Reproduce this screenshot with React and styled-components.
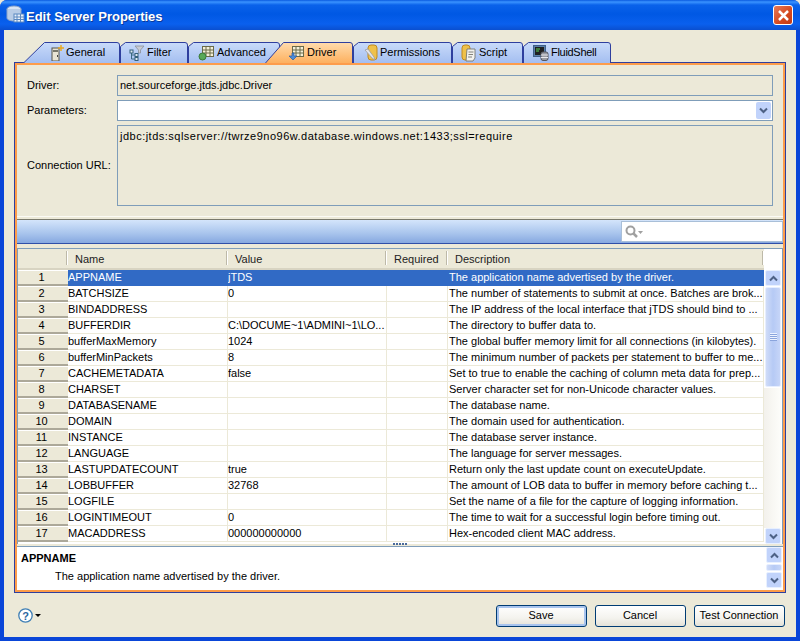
import React from 'react';
import styled, { createGlobalStyle } from 'styled-components';

const GlobalStyle = createGlobalStyle`
  html, body { margin: 0; padding: 0; background: #ece9d8; }
  body { font-family: "Liberation Sans", Arial, sans-serif; font-size: 11px; color: #000; }
  * { box-sizing: border-box; }
`;

const TABS = [
  { name: 'General', width: 97, slant: 21, pad: 26, gap: 0, icon: 'general' },
  { name: 'Filter', width: 68, pad: 9, gap: 1, icon: 'filter' },
  { name: 'Advanced', width: 92, pad: 10, gap: 2, icon: 'advanced' },
  { name: 'Driver', width: 88, slant: 18, pad: 23, gap: 2, icon: 'driver', active: true, overlap: 15 },
  { name: 'Permissions', width: 99, pad: 11, gap: -1, icon: 'permissions' },
  { name: 'Script', width: 71, pad: 9, gap: 1, icon: 'script' },
  { name: 'FluidShell', width: 88, pad: 10, gap: 1, icon: 'shell', tight: true }
];

const ROWS = [
  ['APPNAME', 'jTDS', 'The application name advertised by the driver.'],
  ['BATCHSIZE', '0', 'The number of statements to submit at once. Batches are brok...'],
  ['BINDADDRESS', '', 'The IP address of the local interface that jTDS should bind to ...'],
  ['BUFFERDIR', 'C:\\DOCUME~1\\ADMINI~1\\LO...', 'The directory to buffer data to.'],
  ['bufferMaxMemory', '1024', 'The global buffer memory limit for all connections (in kilobytes).'],
  ['bufferMinPackets', '8', 'The minimum number of packets per statement to buffer to me...'],
  ['CACHEMETADATA', 'false', 'Set to true to enable the caching of column meta data for prep...'],
  ['CHARSET', '', 'Server character set for non-Unicode character values.'],
  ['DATABASENAME', '', 'The database name.'],
  ['DOMAIN', '', 'The domain used for authentication.'],
  ['INSTANCE', '', 'The database server instance.'],
  ['LANGUAGE', '', 'The language for server messages.'],
  ['LASTUPDATECOUNT', 'true', 'Return only the last update count on executeUpdate.'],
  ['LOBBUFFER', '32768', 'The amount of LOB data to buffer in memory before caching t...'],
  ['LOGFILE', '', 'Set the name of a file for the capture of logging information.'],
  ['LOGINTIMEOUT', '0', 'The time to wait for a successful login before timing out.'],
  ['MACADDRESS', '000000000000', 'Hex-encoded client MAC address.']
];

const TabIcon = ({ kind }) => {
  if (kind === 'general') {
    return (
      <svg width="16" height="16" viewBox="0 0 16 16">
        <rect x="3" y="3" width="7" height="13" fill="#e8e4d4" stroke="#55554a" />
        <rect x="4" y="5" width="5" height="2" fill="#77776a" />
        <rect x="8" y="10" width="1" height="2" fill="#444" />
        <path d="M12 0v6M9 3h6" stroke="#e8a820" strokeWidth="1.5" />
      </svg>
    );
  }
  if (kind === 'filter') {
    return (
      <svg width="16" height="16" viewBox="0 0 16 16">
        <path d="M6 1h9l-3.5 4v3h-2V5z" fill="#c8ccd4" stroke="#8a8f9a" strokeWidth="0.8" />
        <path d="M2.5 6v8h4M2.5 10h4" fill="none" stroke="#3a6a80" />
        <rect x="1" y="5" width="3" height="3" fill="#dfe8f0" stroke="#35607a" />
        <rect x="6" y="8.5" width="3" height="3" fill="#dfe8f0" stroke="#35607a" />
        <rect x="6" y="12.5" width="3" height="3" fill="#dfe8f0" stroke="#35607a" />
      </svg>
    );
  }
  if (kind === 'advanced' || kind === 'driver') {
    return (
      <svg width="17" height="16" viewBox="0 0 17 16">
        <rect x="4.5" y="1.5" width="11" height="10" fill="#f4f0d8" stroke="#6a6a48" />
        <path d="M4.5 5h11M4.5 8h11M8 1.5v10M12 1.5v10" stroke="#6a6a48" />
        {kind === 'advanced' ? (
          <circle cx="4.5" cy="11.5" r="3.5" fill="#58a858" stroke="#3a7a3a" />
        ) : (
          <path d="M4 8v3H1l4 4 4-4H6V8z" fill="#4a8ad8" stroke="#2a5aa0" strokeWidth="0.7" />
        )}
      </svg>
    );
  }
  if (kind === 'permissions') {
    return (
      <svg width="16" height="18" viewBox="0 0 16 18">
        <rect x="4" y="1" width="9" height="15" rx="3" fill="#efc14a" stroke="#c08a20" />
        <path d="M1 6l7 8 3 2-1-3-6-8z" fill="#e4e6ea" stroke="#9a9ca4" strokeWidth="0.8" />
      </svg>
    );
  }
  if (kind === 'script') {
    return (
      <svg width="16" height="18" viewBox="0 0 16 18">
        <rect x="1" y="1" width="8" height="15" rx="3" fill="#efc14a" stroke="#c08a20" />
        <path d="M6 5h8v9l-2 3H5z" fill="#f2f2ee" stroke="#77776f" strokeWidth="0.9" />
        <path d="M7.5 8h5M7.5 10.5h4.5M7 13h4" stroke="#77776f" strokeWidth="0.9" />
      </svg>
    );
  }
  return (
    <svg width="16" height="16" viewBox="0 0 16 16">
      <rect x="0.5" y="0.5" width="12" height="11" fill="#5a7fa8" stroke="#3f5f88" />
      <rect x="2" y="2" width="9" height="8" fill="#202020" />
      <path d="M3 4h4M3 6h3" stroke="#58d858" />
      <rect x="8" y="7" width="7" height="8.5" rx="2" fill="#9a9ca4" stroke="#55575f" />
      <path d="M8 10h7M8 12.5h7" stroke="#e8e8ec" />
    </svg>
  );
};

const tabPath = (w, slant) =>
  slant
    ? `M0.5 21 L${slant + 0.5} 0.5 H${w - 3} Q${w - 0.5} 0.5 ${w - 0.5} 3 V21`
    : `M0.5 21 V4.5 L5.5 0.5 H${w - 3} Q${w - 0.5} 0.5 ${w - 0.5} 3 V21`;

const Tab = ({ tab }) => (
  <TabItem $width={tab.width} $pad={tab.pad} $active={tab.active} $overlap={tab.overlap}>
    <TabShape width={tab.width} height="21">
      <defs>
        <linearGradient id={`tab-${tab.icon}`} x1="0" y1="0" x2="0" y2="1">
          <stop offset="0" stopColor={tab.active ? '#ffdcae' : '#c9dbfa'} />
          <stop offset="1" stopColor={tab.active ? '#fdb05e' : '#a4bef0'} />
        </linearGradient>
      </defs>
      <path d={tabPath(tab.width, tab.slant)} fill={`url(#tab-${tab.icon})`} stroke="#2f3f9e" />
    </TabShape>
    <TabIconSlot><TabIcon kind={tab.icon} /></TabIconSlot>
    <TabLabel $gap={tab.gap} $tight={tab.tight}>{tab.name}</TabLabel>
  </TabItem>
);

const Chevron = ({ up }) => (
  <svg width="9" height="7" viewBox="0 0 9 7">
    <path
      d={up ? 'M1 5.5l3.5-3.5 3.5 3.5' : 'M1 1.5l3.5 3.5 3.5-3.5'}
      fill="none"
      stroke="#4d6185"
      strokeWidth="2"
    />
  </svg>
);

export default function App() {
  return (
    <Win>
      <GlobalStyle />
      <TitleBar>
        <svg width="20" height="20" viewBox="0 0 20 20">
          <ellipse cx="8" cy="4" rx="7" ry="3" fill="#d8e4f4" stroke="#8aa4c8" />
          <path d="M1 4v9c0 1.6 3 3 7 3s7-1.4 7-3V4" fill="#b8cce6" stroke="#8aa4c8" />
          <rect x="8" y="9" width="10" height="8" fill="#e8f0fa" stroke="#5a88c0" />
          <path d="M8 12h10M8 14.5h10M11 9v8M14.5 9v8" stroke="#5a88c0" />
        </svg>
        <TitleText>Edit Server Properties</TitleText>
        <CloseButton>
          <svg width="13" height="13" viewBox="0 0 13 13">
            <path d="M2 2l9 9M11 2l-9 9" stroke="#fff" strokeWidth="2.5" />
          </svg>
        </CloseButton>
      </TitleBar>
      <Body>
        <TabStrip>
          {TABS.map(tab => <Tab key={tab.name} tab={tab} />)}
        </TabStrip>
        <Panel>
          <PanelInner>
            <Form>
              <FieldLabel>Driver:</FieldLabel>
              <ReadOnlyField>net.sourceforge.jtds.jdbc.Driver</ReadOnlyField>
              <FieldLabel>Parameters:</FieldLabel>
              <Combo>
                <ComboButton><Chevron /></ComboButton>
              </Combo>
              <FieldLabel>Connection URL:</FieldLabel>
              <UrlField>jdbc:jtds:sqlserver://twrze9no96w.database.windows.net:1433;ssl=require</UrlField>
            </Form>
            <FormSash />
            <ToolBar>
              <SearchBox>
                <svg width="18" height="14" viewBox="0 0 18 14">
                  <circle cx="5.5" cy="5.5" r="4" fill="none" stroke="#a0a0a0" strokeWidth="2" />
                  <path d="M8.5 8.5l3.5 3.5" stroke="#a0a0a0" strokeWidth="2.5" />
                  <path d="M13 6h5l-2.5 3z" fill="#a0a0a0" />
                </svg>
              </SearchBox>
            </ToolBar>
            <Table>
              <TableMain>
                <HeaderRow>
                  <HeaderCell />
                  <HeaderCell>Name</HeaderCell>
                  <HeaderCell>Value</HeaderCell>
                  <HeaderCell>Required</HeaderCell>
                  <HeaderCell>Description</HeaderCell>
                </HeaderRow>
                {ROWS.map((row, i) => (
                  <Row key={row[0]} $selected={i === 0}>
                    <RowNumber>{i + 1}</RowNumber>
                    <Cell>{row[0]}</Cell>
                    <Cell>{row[1]}</Cell>
                    <Cell />
                    <Cell $indent>{row[2]}</Cell>
                  </Row>
                ))}
              </TableMain>
              <TableScroll>
                <ScrollButton><Chevron up /></ScrollButton>
                <ScrollThumb $height={100}>
                  <Grip />
                </ScrollThumb>
                <ScrollTrack />
                <ScrollButton><Chevron /></ScrollButton>
              </TableScroll>
            </Table>
            <DetailSash>
              <SashDots />
            </DetailSash>
            <Detail>
              <DetailText>
                <DetailTitle>APPNAME</DetailTitle>
                <DetailBody>The application name advertised by the driver.</DetailBody>
              </DetailText>
              <DetailScroll>
                <ScrollButton><Chevron up /></ScrollButton>
                <ScrollThumb $height={7} />
                <ScrollButton><Chevron /></ScrollButton>
              </DetailScroll>
            </Detail>
          </PanelInner>
        </Panel>
        <Footer>
          <HelpButton>
            <svg width="15" height="15" viewBox="0 0 15 15">
              <circle cx="7.5" cy="7.5" r="6.7" fill="#fff" stroke="#3f7fb5" strokeWidth="1.3" />
              <text x="7.5" y="11.5" textAnchor="middle" fontSize="11" fontWeight="700" fill="#2a66a0" fontFamily="Liberation Sans">?</text>
            </svg>
            <HelpCaret />
          </HelpButton>
          <Buttons>
            <Button $default>Save</Button>
            <Button>Cancel</Button>
            <Button>Test Connection</Button>
          </Buttons>
        </Footer>
      </Body>
    </Win>
  );
}

const Win = styled.div`
  width: 800px;
  height: 641px;
  display: flex;
  flex-direction: column;
  overflow: hidden;
  background: #0a46d8;
  border-radius: 7px 7px 0 0;
`;

const TitleBar = styled.div`
  height: 30px;
  flex: none;
  display: flex;
  align-items: center;
  padding: 0 7px 0 6px;
  background: linear-gradient(
    180deg,
    #0a5ae0 0,
    #3a93ff 2px,
    #0a62ea 5px,
    #0058e4 14px,
    #0a60ee 24px,
    #0a4fd0 30px
  );
`;

const TitleText = styled.div`
  flex: 1;
  padding-top: 3px;
  color: #fff;
  font-size: 13px;
  font-weight: 700;
  text-shadow: 1px 1px 0 #0a3a9a;
`;

const CloseButton = styled.div`
  width: 20px;
  height: 20px;
  display: flex;
  align-items: center;
  justify-content: center;
  border: 1px solid #fff;
  border-radius: 3px;
  background: linear-gradient(135deg, #e87a58, #d4481e 60%, #c23a14);
`;

const Body = styled.div`
  flex: 1;
  display: flex;
  flex-direction: column;
  margin: 0 4px 4px;
  padding: 12px 10px 0;
  background: #ece9d8;
`;

const TabStrip = styled.div`
  display: flex;
  height: 20px;
  padding-left: 9px;
  position: relative;
  z-index: 1;
`;

const TabItem = styled.div`
  position: relative;
  z-index: ${props => (props.$active ? 2 : 'auto')};
  flex: none;
  width: ${props => props.$width}px;
  height: 21px;
  margin-left: ${props => (props.$overlap ? -props.$overlap : 0)}px;
  padding-left: ${props => props.$pad}px;
  display: flex;
  align-items: center;
`;

const TabShape = styled.svg`
  position: absolute;
  left: 0;
  top: 0;
`;

const TabIconSlot = styled.span`
  position: relative;
  display: flex;
  width: 17px;
  margin-top: 1px;
`;

const TabLabel = styled.span`
  position: relative;
  margin-left: ${props => props.$gap}px;
  margin-bottom: 2px;
  white-space: nowrap;
  letter-spacing: ${props => (props.$tight ? '-0.3px' : '0')};
`;

const Panel = styled.div`
  height: 531px;
  flex: none;
  border: 1px solid #2f3f9e;
`;

const PanelInner = styled.div`
  height: 100%;
  display: flex;
  flex-direction: column;
  border: 2px solid #fd9c4a;
`;

const Form = styled.div`
  height: 151px;
  flex: none;
  padding: 10px 10px 11px;
  display: grid;
  grid-template-columns: 90px 1fr;
  grid-template-rows: 21px 21px 81px;
  row-gap: 4px;
  align-items: center;
`;

const FieldLabel = styled.label`
  white-space: nowrap;
  margin-bottom: 2px;
`;

const ReadOnlyField = styled.div`
  height: 100%;
  border: 1px solid #7f9db9;
  padding: 0 2px;
  line-height: 19px;
`;

const UrlField = styled(ReadOnlyField)`
  padding-top: 1px;
  letter-spacing: 0.49px;
`;

const Combo = styled.div`
  height: 100%;
  border: 1px solid #7f9db9;
  background: #fff;
  display: flex;
  justify-content: flex-end;
  align-items: center;
  padding-right: 1px;
`;

const ComboButton = styled.div`
  width: 15px;
  height: 17px;
  display: flex;
  align-items: center;
  justify-content: center;
  border-radius: 2px;
  background: #c1d3fb;
`;

const FormSash = styled.div`
  height: 3px;
  flex: none;
  border-top: 1px solid #fbfaf4;
`;

const ToolBar = styled.div`
  height: 25px;
  flex: none;
  display: flex;
  justify-content: flex-end;
  align-items: center;
  border-top: 1px solid #7a7a6c;
  border-bottom: 1px solid #2f4fa8;
  background: linear-gradient(180deg, #d4e5fb 0, #a7c3ec 60%, #86a8e0 100%);
`;

const SearchBox = styled.div`
  width: 162px;
  height: 21px;
  margin-top: -1px;
  padding: 3px 0 0 3px;
  background: #fff;
  border: 1px solid #a9bfd8;
`;

const Table = styled.div`
  height: 296px;
  flex: none;
  margin-top: 4px;
  display: flex;
  background: #fff;
  border: 1px solid #7f9db9;
  border-bottom: none;
`;

const TableMain = styled.div`
  width: 746px;
  flex: none;
  display: flex;
  flex-direction: column;
`;

const COLUMNS = '50px 160px 159px 61px 316px';

const HeaderRow = styled.div`
  display: grid;
  grid-template-columns: ${COLUMNS};
  height: 21px;
  flex: none;
  background: #ece9d8;
  box-shadow: inset 0 -2px 0 #d8d4c2;
`;

const HeaderCell = styled.div`
  padding: 2px 0 0 7px;
  line-height: 16px;
  position: relative;
  color: #222;

  &::after {
    content: '';
    position: absolute;
    right: 1px;
    top: 2px;
    height: 14px;
    width: 1px;
    background: #bdb9a8;
    box-shadow: 1px 0 0 #fff;
  }
`;

const Row = styled.div`
  display: grid;
  grid-template-columns: ${COLUMNS};
  height: 16px;
  flex: none;
  line-height: 15px;
  background: ${props => (props.$selected ? '#316ac5' : '#fff')};
  color: ${props => (props.$selected ? '#fff' : '#000')};

  & > div:not(:first-child) {
    border-color: ${props => (props.$selected ? '#316ac5' : '#ece9d8')};
  }
`;

const RowNumber = styled.div`
  text-align: center;
  background: #ece9d8;
  color: #000;
  padding-right: 3px;
  box-shadow: inset 0 1px 0 #fff, inset 0 -2px 0 #aca899;
`;

const Cell = styled.div`
  padding-left: ${props => (props.$indent ? 1 : 0)}px;
  overflow: hidden;
  white-space: nowrap;
  border-right: 1px solid;
  border-bottom: 1px solid;
`;

const TableScroll = styled.div`
  width: 17px;
  flex: none;
  display: flex;
  flex-direction: column;
  padding-top: 21px;
  background: #fff;
`;

const ScrollButton = styled.div`
  width: 16px;
  height: 16px;
  flex: none;
  margin-left: 1px;
  display: flex;
  align-items: center;
  justify-content: center;
  background: #c1d3fb;
  border: 1px solid #e8f0ff;
  border-radius: 2px;
`;

const ScrollThumb = styled.div`
  height: ${props => props.$height}px;
  flex: none;
  margin: 1px 0 1px 1px;
  width: 16px;
  display: flex;
  align-items: center;
  justify-content: center;
  background: linear-gradient(90deg, #d0dcf8, #b6caf5 50%, #c6d5f8);
  border: 1px solid #e6eeff;
  border-radius: 2px;
`;

const Grip = styled.div`
  width: 7px;
  height: 8px;
  background: repeating-linear-gradient(180deg, #eef3ff 0 1px, #8aa4dc 1px 2px);
`;

const ScrollTrack = styled.div`
  flex: 1;
  background: linear-gradient(90deg, #f3f1ec, #fdfdfa);
`;

const DetailSash = styled.div`
  height: 2px;
  flex: none;
  position: relative;
`;

const SashDots = styled.div`
  position: absolute;
  left: 376px;
  top: -1px;
  width: 14px;
  height: 2px;
  background: repeating-linear-gradient(90deg, #4a6a9a 0 2px, transparent 2px 3px);
`;

const Detail = styled.div`
  height: 44px;
  flex: none;
  display: flex;
  background: #fff;
  border-top: 1px solid #7f9db9;
`;

const DetailText = styled.div`
  flex: 1;
  padding: 4px 0 0 4px;
`;

const DetailTitle = styled.div`
  font-weight: 700;
  line-height: 14px;
`;

const DetailBody = styled.div`
  margin-top: 4px;
  padding-left: 34px;
  line-height: 14px;
`;

const DetailScroll = styled.div`
  width: 17px;
  flex: none;
  margin-right: 1px;
  display: flex;
  flex-direction: column;
`;

const Footer = styled.div`
  flex: 1;
  display: flex;
  justify-content: space-between;
  align-items: flex-start;
  padding: 12px 1px 0 4px;
`;

const HelpButton = styled.div`
  display: flex;
  align-items: center;
  margin-top: 3px;
`;

const HelpCaret = styled.span`
  margin-left: 2px;
  border-left: 3px solid transparent;
  border-right: 3px solid transparent;
  border-top: 3px solid #000;
`;

const Buttons = styled.div`
  display: flex;
  gap: 8px;
`;

const Button = styled.div`
  width: 91px;
  height: 22px;
  padding: 0 1px 2px 0;
  display: flex;
  align-items: center;
  justify-content: center;
  border: 1px solid #003c74;
  border-radius: 3px;
  background: linear-gradient(180deg, #ffffff, #f4f3ee 60%, #e4e2d8);
  box-shadow: ${props => (props.$default ? 'inset 0 0 0 2px #a8c4ee' : 'none')};
`;
